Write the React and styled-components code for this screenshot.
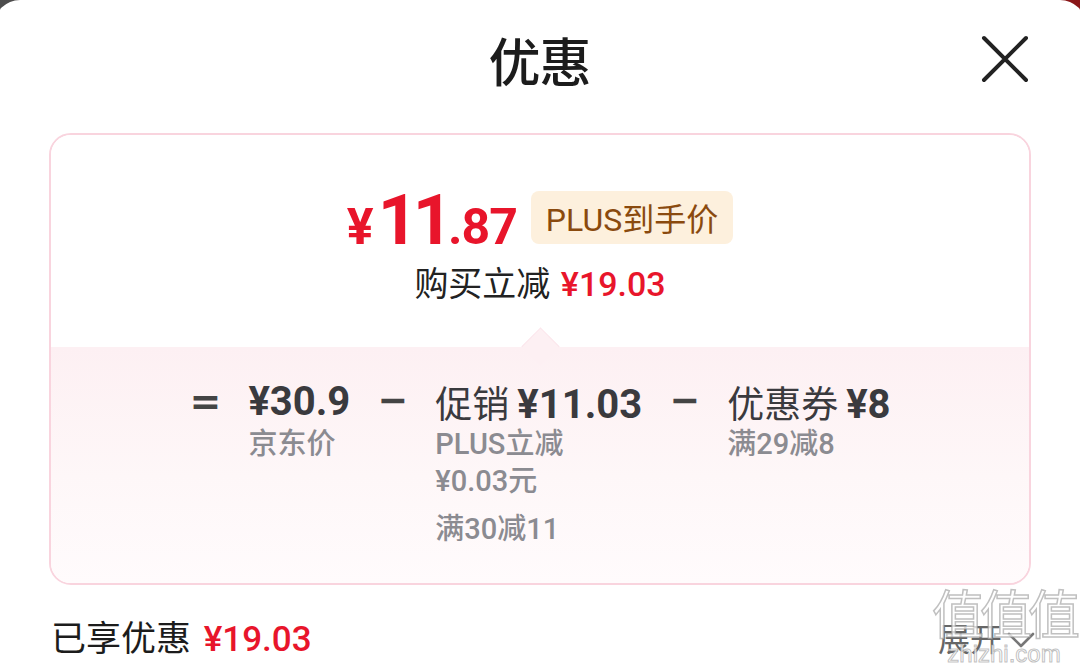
import styled, { createGlobalStyle } from "styled-components";

const GlobalStyle = createGlobalStyle`
  html, body {
    margin: 0;
    padding: 0;
    background: linear-gradient(90deg, #4d4d4d 0%, #6a3030 50%, #8a1618 100%);
    font-family: "Roboto", "Noto Sans CJK SC", sans-serif;
    overflow: hidden;
  }
`;

const breakdown = [
  { label: "", price: "¥30.9", notes: [["京东价"]] },
  { label: "促销", price: "¥11.03", notes: [["PLUS立减", "¥0.03元"], ["满30减11"]] },
  { label: "优惠券", price: "¥8", notes: [["满29减8"]] },
];

const CloseIcon = () => (
  <svg width="48" height="48" viewBox="0 0 48 48" fill="none">
    <path
      d="M3 3L45 45M45 3L3 45"
      stroke="#222"
      strokeWidth="4"
      strokeLinecap="round"
    />
  </svg>
);

const Chevron = () => (
  <svg width="30" height="20" viewBox="0 0 30 20" fill="none">
    <path
      d="M3 4L15 16L27 4"
      stroke="#777"
      strokeWidth="2.6"
      strokeLinecap="round"
      strokeLinejoin="round"
    />
  </svg>
);

const App = () => {
  return (
    <>
      <GlobalStyle />
      <StyledSheet>
        <StyledHeader>
          <span />
          <StyledTitle>优惠</StyledTitle>
          <StyledClose aria-label="close">
            <CloseIcon />
          </StyledClose>
        </StyledHeader>

        <StyledCard>
          <StyledSummary>
            <StyledPriceRow>
              <StyledPrice>
                <span className="yen">¥</span>
                <span className="int">11</span>
                <span className="dec">.87</span>
              </StyledPrice>
              <StyledBadge>PLUS到手价</StyledBadge>
            </StyledPriceRow>
            <StyledSaving>
              购买立减 <em>¥19.03</em>
            </StyledSaving>
          </StyledSummary>

          <StyledDetail>
            <StyledNotch />
            <StyledFormula>
              <StyledOp>=</StyledOp>
              {breakdown.map((item, i) => (
                <StyledTerm key={i}>
                  {i > 0 && <StyledOp>−</StyledOp>}
                  <StyledColumn>
                    <StyledAmount>
                      {item.label && <span className="label">{item.label} </span>}
                      <b>{item.price}</b>
                    </StyledAmount>
                    {item.notes.map((note, j) => (
                      <StyledNote key={j} $spaced={j > 0}>
                        {note.map((line) => (
                          <div key={line}>{line}</div>
                        ))}
                      </StyledNote>
                    ))}
                  </StyledColumn>
                </StyledTerm>
              ))}
            </StyledFormula>
          </StyledDetail>
        </StyledCard>

        <StyledFooter>
          <StyledTotal>
            已享优惠 <em>¥19.03</em>
          </StyledTotal>
          <StyledExpand>
            展开
            <Chevron />
          </StyledExpand>
          <StyledWatermark>
            <span className="mark">值值值</span>
            <span className="site">zhizhi.com</span>
          </StyledWatermark>
        </StyledFooter>
      </StyledSheet>
    </>
  );
};

const StyledSheet = styled.div`
  position: relative;
  margin: 0 -6px;
  min-height: 672px;
  background: #fff;
  border-radius: 26px 26px 0 0;
`;

const StyledHeader = styled.div`
  display: grid;
  grid-template-columns: 1fr auto 1fr;
  align-items: center;
  height: 118px;
  padding: 0 57px 2px 56px;
`;

const StyledTitle = styled.h1`
  margin: 0;
  font-family: "Noto Sans CJK SC", sans-serif;
  font-size: 52px;
  font-weight: 500;
  color: #1c1c1c;
  letter-spacing: -1px;
`;

const StyledClose = styled.button`
  justify-self: end;
  display: flex;
  padding: 0;
  border: none;
  background: none;
`;

const StyledCard = styled.div`
  margin: 13px 55px 0;
  border: 2px solid #f9d4de;
  border-radius: 22px;
  overflow: hidden;
`;

const StyledSummary = styled.div`
  display: flex;
  flex-direction: column;
  align-items: center;
  height: 212px;
  padding-top: 50px;
  box-sizing: border-box;
  background: #fff;
`;

const StyledPriceRow = styled.div`
  display: flex;
  align-items: center;
  gap: 14px;
`;

const StyledPrice = styled.div`
  display: flex;
  align-items: baseline;
  height: 70px;
  line-height: 70px;
  color: #e8152b;
  font-family: "Roboto", sans-serif;
  font-weight: 700;
  .yen {
    font-size: 50px;
    margin-right: 4px;
  }
  .int {
    font-size: 70px;
    letter-spacing: -5px;
  }
  .dec {
    font-size: 50px;
    letter-spacing: -1px;
  }
`;

const StyledBadge = styled.span`
  display: flex;
  align-items: center;
  height: 53px;
  padding: 0 15px;
  margin-top: -6px;
  border-radius: 8px;
  background: #fdf0dd;
  color: #8a4a0e;
  font-size: 32px;
  font-weight: 400;
`;

const StyledSaving = styled.div`
  margin-top: 9px;
  line-height: 40px;
  font-size: 34px;
  color: #222;
  em {
    font-style: normal;
    font-weight: 500;
    color: #e8152b;
    font-size: 34px;
    margin-left: 2px;
  }
`;

const StyledDetail = styled.div`
  position: relative;
  padding: 31px 0 35px;
  background: linear-gradient(180deg, #fdf0f3 0%, #fef7f8 55%, #fffbfc 100%);
`;

const StyledNotch = styled.div`
  position: absolute;
  top: -14px;
  left: 50%;
  width: 26px;
  height: 26px;
  margin-left: -13px;
  background: #fdf0f3;
  border-top: 1px solid #fbe6ec;
  border-left: 1px solid #fbe6ec;
  transform: rotate(45deg);
`;

const StyledFormula = styled.div`
  display: flex;
  justify-content: center;
  align-items: flex-start;
  gap: 30px;
  margin-left: 4px;
  color: #3a3a3e;
`;

const StyledTerm = styled.div`
  display: flex;
  align-items: flex-start;
  gap: 30px;
`;

const StyledOp = styled.span`
  width: 25px;
  height: 48px;
  line-height: 48px;
  text-align: center;
  font-size: 40px;
  font-weight: 700;
  color: #444;
  transform: scaleX(1.35);
`;

const StyledColumn = styled.div`
  display: flex;
  flex-direction: column;
`;

const StyledAmount = styled.div`
  display: flex;
  align-items: baseline;
  height: 48px;
  line-height: 48px;
  white-space: nowrap;
  .label {
    font-size: 37px;
    font-family: "Noto Sans CJK SC", sans-serif;
    margin-right: 8px;
  }
  b {
    font-size: 40px;
    font-weight: 700;
  }
`;

const StyledNote = styled.div`
  margin-top: ${(p) => (p.$spaced ? "11px" : "0")};
  line-height: 37px;
  font-size: 29px;
  font-weight: 500;
  color: #8b8b91;
  div {
    height: 37px;
  }
`;

const StyledFooter = styled.div`
  position: relative;
  display: flex;
  justify-content: space-between;
  align-items: center;
  margin-top: 31px;
  padding: 0 50px 0 57px;
  line-height: 48px;
`;

const StyledTotal = styled.div`
  font-size: 35px;
  color: #1c1c1c;
  em {
    font-style: normal;
    color: #e8152b;
    font-weight: 500;
    font-size: 35px;
    margin-left: 4px;
  }
`;

const StyledExpand = styled.div`
  display: flex;
  align-items: center;
  gap: 4px;
  font-size: 32px;
  color: #666;
`;

const StyledWatermark = styled.div`
  position: absolute;
  right: 10px;
  top: -34px;
  display: flex;
  flex-direction: column;
  align-items: center;
  pointer-events: none;
  .mark {
    font-family: "Noto Sans CJK SC", sans-serif;
    font-size: 52px;
    line-height: 60px;
    letter-spacing: -4px;
    color: rgba(255, 255, 255, 0.75);
    -webkit-text-stroke: 1.5px rgba(150, 150, 150, 0.6);
  }
  .site {
    font-family: "Liberation Sans", sans-serif;
    font-size: 24px;
    line-height: 24px;
    color: rgba(255, 255, 255, 0.8);
    -webkit-text-stroke: 1px rgba(150, 150, 150, 0.6);
  }
`;

export default App;
